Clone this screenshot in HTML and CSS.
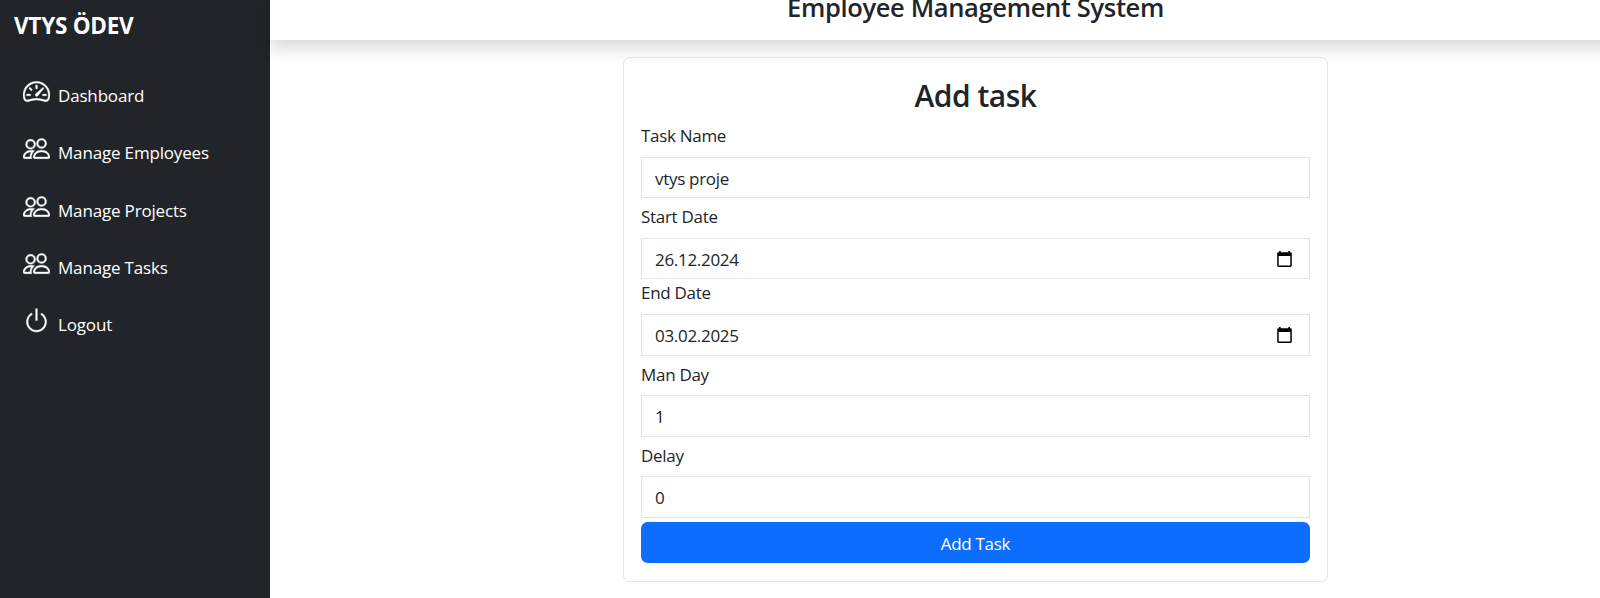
FILE: index.html
```html
<!DOCTYPE html>
<html lang="tr">
<head>
<meta charset="utf-8">
<title>Employee Management System</title>
<link rel="stylesheet" href="styles.css">
</head>
<body>
<svg class="sprite" aria-hidden="true">
  <symbol id="speed" viewBox="0 0 16 16"><path d="M8 4a.5.5 0 0 1 .5.5V6a.5.5 0 0 1-1 0V4.500A.5.5 0 0 1 8 4M3.732 5.732a.5.5 0 0 1 .707 0l.915.914a.5.5 0 1 1-.708.708l-.914-.915a.5.5 0 0 1 0-.707M2 10a.5.5 0 0 1 .5-.5h1.586a.5.5 0 0 1 0 1H2.500A.5.5 0 0 1 2 10m9.500 0a.5.5 0 0 1 .5-.5h1.500a.5.5 0 0 1 0 1H12a.5.5 0 0 1-.5-.5m.754-4.246a.39.39 0 0 0-.527-.02L7.547 9.310a.91.91 0 1 0 1.302 1.258l3.434-4.297a.39.39 0 0 0-.029-.518z"/><path fill-rule="evenodd" d="M0 10a8 8 0 1 1 15.547 2.661c-.442 1.253-1.845 1.602-2.932 1.250C11.309 13.488 9.475 13 8 13c-1.474 0-3.310.488-4.615.911-1.087.352-2.490.003-2.932-1.250A8 8 0 0 1 0 10m8-7a7 7 0 0 0-6.603 9.329c.203.575.923.876 1.680.630C4.397 12.533 6.358 12 8 12s3.604.532 4.923.960c.757.245 1.477-.056 1.680-.631A7 7 0 0 0 8 3"/></symbol>
  <symbol id="people" viewBox="0 0 16 16"><path d="M15 14s1 0 1-1-1-4-5-4-5 3-5 4 1 1 1 1zm-7.978-1L7 12.996c.001-.264.167-1.030.760-1.720C8.312 10.629 9.282 10 11 10c1.717 0 2.687.630 3.240 1.276.593.690.758 1.457.760 1.720l-.008.002-.014.002zM11 7a2 2 0 1 0 0-4 2 2 0 0 0 0 4m3-2a3 3 0 1 1-6 0 3 3 0 0 1 6 0M6.936 9.280a6 6 0 0 0-1.230-.247A7 7 0 0 0 5 9c-4 0-5 3-5 4q0 1 1 1h4.216A2.240 2.240 0 0 1 5 13c0-1.010.377-2.042 1.090-2.904.243-.294.526-.569.846-.816M4.920 10A5.500 5.500 0 0 0 4 13H1c0-.260.164-1.030.760-1.724.545-.636 1.492-1.256 3.160-1.275ZM1.500 5.500a3 3 0 1 1 6 0 3 3 0 0 1-6 0m3-2a2 2 0 1 0 0 4 2 2 0 0 0 0-4"/></symbol>
  <symbol id="power" viewBox="0 0 16 16"><path d="M7.500 1v7h1V1z"/><path d="M3 8.812a5 5 0 0 1 2.578-4.375l-.485-.874A6 6 0 1 0 11 3.616l-.501.865A5 5 0 1 1 3 8.812"/></symbol>
  <symbol id="calendar" viewBox="0 0 15 16"><path fill-rule="evenodd" d="M2 0h1.700v1.300h7.600V0H13v1.300h.500a1.300 1.300 0 0 1 1.300 1.300v12a1.300 1.300 0 0 1-1.300 1.300h-12a1.300 1.300 0 0 1-1.300-1.300v-12a1.300 1.300 0 0 1 1.300-1.300H2zM1.700 5v9.400h11.600V5z"/></symbol>
</svg>
<div class="layout">
  <aside class="sidebar">
    <a class="brand">VTYS ÖDEV</a>
    <nav class="menu">
      <a class="item"><svg><use href="#speed"/></svg><span>Dashboard</span></a>
      <a class="item"><svg><use href="#people"/></svg><span>Manage Employees</span></a>
      <a class="item"><svg><use href="#people"/></svg><span>Manage Projects</span></a>
      <a class="item"><svg><use href="#people"/></svg><span>Manage Tasks</span></a>
      <a class="item"><svg><use href="#power"/></svg><span>Logout</span></a>
    </nav>
  </aside>
  <main class="main">
    <header class="topbar"><h4>Employee Management System</h4></header>
    <form class="card">
      <h3>Add task</h3>
      <label>Task Name</label>
      <div class="field"><span>vtys proje</span></div>
      <label class="spaced">Start Date</label>
      <div class="field"><span>26.12.2024</span><svg><use href="#calendar"/></svg></div>
      <label>End Date</label>
      <div class="field"><span>03.02.2025</span><svg><use href="#calendar"/></svg></div>
      <label class="spaced">Man Day</label>
      <div class="field"><span>1</span></div>
      <label class="spaced">Delay</label>
      <div class="field"><span>0</span></div>
      <button type="button">Add Task</button>
    </form>
  </main>
</div>
</body>
</html>
```

FILE: styles.css
```css
* { box-sizing: border-box; }
body {
  margin: 0;
  height: 598px;
  overflow: hidden;
  background: #fff;
  color: #212529;
  font: 17px/26px "Open Sans", "Noto Sans", sans-serif;
  letter-spacing: -0.3px;
}
.sprite { display: none; }
.layout { display: flex; height: 598px; overflow: hidden; }
.sidebar {
  flex: 0 0 270px;
  padding: 9px 14px;
  background: #212529;
  color: #fff;
}
.brand {
  display: block;
  height: 32px;
  font-size: 22.5px;
  line-height: 33px;
  font-weight: 700;
  letter-spacing: -0.25px;
}
.menu { display: flex; flex-direction: column; padding: 26px 0 0 9px; }
.item {
  display: flex;
  gap: 8px;
  height: 57.3px;
  padding-top: 11px;
  letter-spacing: -0.17px;
}
.item svg {
  width: 27px;
  height: 27px;
  fill: #fff;
  stroke: #fff;
  stroke-width: .2px;
}
.item span { padding-top: 5.2px; }
.main { flex: 1; min-width: 0; }
.topbar {
  height: 40px;
  margin-right: -40px;
  padding: 0 40px 0 81px;
  background: #fff;
  box-shadow: 0 8.6px 17.2px rgba(0, 0, 0, .15);
  text-align: center;
}
h4 {
  margin: 0;
  font-size: 25.5px;
  line-height: 14px;
  font-weight: 600;
  letter-spacing: -0.35px;
}
.card {
  display: flex;
  flex-direction: column;
  width: 705px;
  height: 525px;
  margin: 17px 0 0 353px;
  padding: 17px;
  border: 1px solid #e1e4e8;
  border-radius: 6.5px;
}
h3 {
  margin: 0 0 5.3px;
  font-size: 30px;
  line-height: 42px;
  font-weight: 600;
  letter-spacing: -0.5px;
  text-align: center;
}
label { flex: none; height: 26px; margin-bottom: 8.7px; line-height: 28px; }
.spaced { margin-top: 5px; }
.field {
  display: flex;
  flex: none;
  align-items: center;
  justify-content: space-between;
  height: 41.4px;
  padding: 0 17.500px 0 13px;
  border: 1px solid #e1e4e8;
}
.field span { padding-top: 2px; }
.field svg { width: 15px; height: 16px; }
button {
  flex: none;
  height: 41.4px;
  margin-top: 4.3px;
  padding: 2px 0 0;
  border: 0;
  border-radius: 6.5px;
  background: #0d6efd;
  color: #fff;
  font: inherit;
  letter-spacing: inherit;
}
```
